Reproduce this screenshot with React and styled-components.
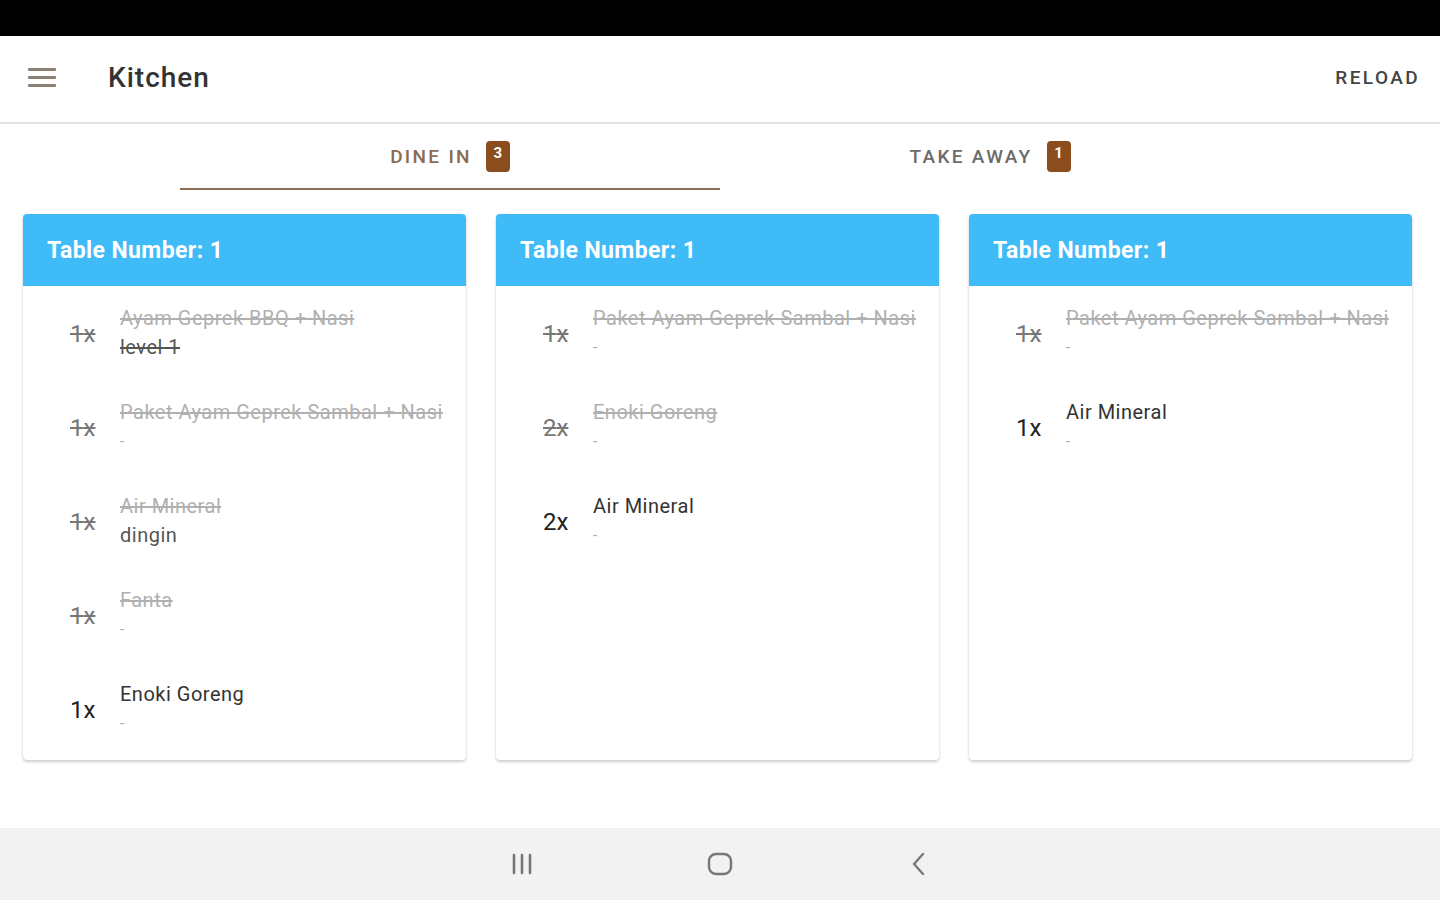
import styled, { createGlobalStyle } from "styled-components";

const GlobalStyle = createGlobalStyle`
  * {
    box-sizing: border-box;
  }
  body {
    margin: 0;
    font-family: Roboto, "Noto Sans", "Liberation Sans", sans-serif;
    background: #fff;
  }
`;

const orders = [
  {
    table: 1,
    items: [
      { qty: 1, name: "Ayam Geprek BBQ + Nasi", note: "level 1", done: true, noteDone: true },
      { qty: 1, name: "Paket Ayam Geprek Sambal + Nasi", note: "-", done: true },
      { qty: 1, name: "Air Mineral", note: "dingin", done: true },
      { qty: 1, name: "Fanta", note: "-", done: true },
      { qty: 1, name: "Enoki Goreng", note: "-", done: false },
    ],
  },
  {
    table: 1,
    items: [
      { qty: 1, name: "Paket Ayam Geprek Sambal + Nasi", note: "-", done: true },
      { qty: 2, name: "Enoki Goreng", note: "-", done: true },
      { qty: 2, name: "Air Mineral", note: "-", done: false },
    ],
  },
  {
    table: 1,
    items: [
      { qty: 1, name: "Paket Ayam Geprek Sambal + Nasi", note: "-", done: true },
      { qty: 1, name: "Air Mineral", note: "-", done: false },
    ],
  },
];

const App = () => {
  return (
    <Screen>
      <GlobalStyle />
      <StatusBar />
      <AppBar>
        <MenuButton aria-label="menu">
          <span />
          <span />
          <span />
        </MenuButton>
        <Title>Kitchen</Title>
        <ReloadButton type="button">Reload</ReloadButton>
      </AppBar>

      <Tabs>
        <Tab $active>
          DINE IN <Badge>3</Badge>
        </Tab>
        <Tab>
          TAKE AWAY <Badge>1</Badge>
        </Tab>
      </Tabs>

      <Content>
        {orders.map((order, i) => (
          <Card key={i}>
            <CardHeader>Table Number: {order.table}</CardHeader>
            <CardBody>
              {order.items.map((item, j) => (
                <ItemRow key={j}>
                  <Qty $done={item.done}>{item.qty}x</Qty>
                  <ItemText>
                    <ItemName $done={item.done}>{item.name}</ItemName>
                    <ItemNote $dash={item.note === "-"} $done={item.noteDone}>
                      {item.note}
                    </ItemNote>
                  </ItemText>
                </ItemRow>
              ))}
            </CardBody>
          </Card>
        ))}
      </Content>

      <NavBar>
        <NavIcon width="28" height="24" viewBox="0 0 28 24">
          <path d="M6 3v18M14 3v18M22 3v18" stroke="#777" strokeWidth="2.6" strokeLinecap="round" />
        </NavIcon>
        <NavIcon width="28" height="26" viewBox="0 0 28 26">
          <rect x="3" y="3" width="22" height="20" rx="7" fill="none" stroke="#777" strokeWidth="2.4" />
        </NavIcon>
        <NavIcon width="28" height="26" viewBox="0 0 28 26">
          <path d="M19 3l-9 10 9 10" fill="none" stroke="#777" strokeWidth="2.4" strokeLinecap="round" strokeLinejoin="round" />
        </NavIcon>
      </NavBar>
    </Screen>
  );
};

const Screen = styled.div`
  width: 1440px;
  height: 900px;
  display: flex;
  flex-direction: column;
  overflow: hidden;
`;

const StatusBar = styled.div`
  height: 36px;
  background: #000;
  flex-shrink: 0;
`;

const AppBar = styled.header`
  height: 88px;
  flex-shrink: 0;
  display: flex;
  align-items: center;
  padding: 0 20px 0 28px;
  background: #fff;
  border-bottom: 2px solid #e3e3e3;
`;

const MenuButton = styled.div`
  width: 28px;
  display: flex;
  flex-direction: column;
  gap: 5px;
  margin-top: -4px;

  span {
    display: block;
    height: 3px;
    background: #8c7f74;
    border-radius: 1px;
  }
`;

const Title = styled.h1`
  margin: -4px 0 0 52px;
  font-size: 28px;
  font-weight: 500;
  color: #333;
  letter-spacing: 1px;
  flex: 1;
`;

const ReloadButton = styled.button`
  border: none;
  background: none;
  padding: 0;
  margin-top: -4px;
  font-family: inherit;
  font-size: 19px;
  font-weight: 500;
  letter-spacing: 2.4px;
  text-transform: uppercase;
  color: #444;
`;

const Tabs = styled.nav`
  height: 68px;
  flex-shrink: 0;
  width: 1080px;
  margin: 0 auto;
  display: grid;
  grid-template-columns: 1fr 1fr;
`;

const Tab = styled.div`
  display: flex;
  align-items: center;
  justify-content: center;
  gap: 14px;
  font-size: 19px;
  font-weight: 500;
  letter-spacing: 2.3px;
  color: ${({ $active }) => ($active ? "#8a6b52" : "#6b6b6b")};
  border-bottom: 2px solid ${({ $active }) => ($active ? "#8d6e58" : "transparent")};
  margin-bottom: 2px;
`;

const Badge = styled.span`
  display: inline-flex;
  align-items: center;
  justify-content: center;
  width: 24px;
  height: 31px;
  border-radius: 4px;
  background: #8b4d1d;
  color: #fff;
  font-size: 15px;
  font-weight: 700;
  letter-spacing: 0;
  padding-bottom: 6px;
`;

const Content = styled.main`
  flex: 1;
  display: grid;
  grid-template-columns: repeat(3, 443px);
  column-gap: 30px;
  align-items: start;
  padding: 22px 28px 0 23px;
`;

const Card = styled.section`
  height: 546px;
  background: #fff;
  border-radius: 4px;
  overflow: hidden;
  box-shadow: 0 2px 3px rgba(0, 0, 0, 0.18), 0 0 2px rgba(0, 0, 0, 0.08);
`;

const CardHeader = styled.div`
  height: 72px;
  display: flex;
  align-items: center;
  padding: 0 24px;
  background: #3fbcf8;
  color: #fff;
  font-size: 23px;
  font-weight: 700;
  letter-spacing: 0.4px;
`;

const CardBody = styled.div`
  display: flex;
  flex-direction: column;
  gap: 36px;
  padding: 18px 20px 20px 47px;
`;

const ItemRow = styled.div`
  display: flex;
  align-items: center;
`;

const Qty = styled.span`
  width: 50px;
  flex-shrink: 0;
  padding-top: 2px;
  font-size: 24px;
  color: ${({ $done }) => ($done ? "#777" : "#222")};
  text-decoration: ${({ $done }) => ($done ? "line-through" : "none")};
`;

const ItemText = styled.div`
  display: flex;
  flex-direction: column;
`;

const ItemName = styled.span`
  font-size: 20px;
  line-height: 28px;
  letter-spacing: 0.5px;
  white-space: nowrap;
  color: ${({ $done }) => ($done ? "#b0b0b0" : "#333")};
  text-decoration: ${({ $done }) => ($done ? "line-through" : "none")};
`;

const ItemNote = styled.span`
  font-size: ${({ $dash }) => ($dash ? "15px" : "20px")};
  line-height: 30px;
  letter-spacing: 0.5px;
  color: ${({ $dash }) => ($dash ? "#aaa" : "#555")};
  text-decoration: ${({ $done }) => ($done ? "line-through" : "none")};
`;

const NavBar = styled.footer`
  height: 72px;
  flex-shrink: 0;
  background: #f2f2f2;
  display: flex;
  align-items: center;
  justify-content: center;
  gap: 170px;
`;

const NavIcon = styled.svg`
  display: block;
`;

export default App;
